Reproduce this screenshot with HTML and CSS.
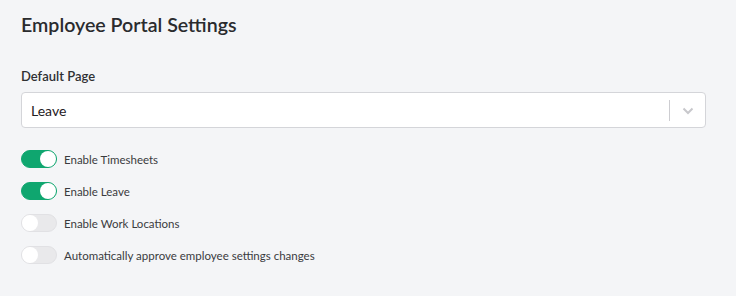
FILE: index.html
```html
<html>
    <head>
        <link rel="stylesheet" href="styles.css">
    </head>
    <body>
        <div class="panel">
            <h1 class="panelTitle">Employee Portal Settings</h1>
            <label class="fieldLabel">Default Page</label>
            <div class="selectBox">
                <span class="selectValue">Leave</span>
                <span class="selectDivider"></span>
                <span class="selectArrow">
                    <svg width="12" height="8" viewBox="0 0 12 8"><path d="M1.5 1.5 L6 6 L10.5 1.5" fill="none" stroke="#c8c8cc" stroke-width="2"/></svg>
                </span>
            </div>
            <div class="toggleList">
                <div class="toggleRow">
                    <span class="toggle on"><span class="knob"></span></span>
                    <span class="toggleText">Enable Timesheets</span>
                </div>
                <div class="toggleRow">
                    <span class="toggle on"><span class="knob"></span></span>
                    <span class="toggleText">Enable Leave</span>
                </div>
                <div class="toggleRow">
                    <span class="toggle"><span class="knob"></span></span>
                    <span class="toggleText">Enable Work Locations</span>
                </div>
                <div class="toggleRow">
                    <span class="toggle"><span class="knob"></span></span>
                    <span class="toggleText">Automatically approve employee settings changes</span>
                </div>
            </div>
        </div>
    </body>
</html>
```

FILE: styles.css
```css
/* page */
html{
    background-color: #f4f5f7;
}
body{
    margin: 0;
    font-family: Lato, "Open Sans", sans-serif;
    color: #2f3033;
}
.panel{
    padding: 12px 30px 0 21px;
}
.panelTitle{
    margin: 0;
    font-size: 19.6px;
    font-weight: 600;
    line-height: 26px;
    color: #2a2b2e;
}
.fieldLabel{
    display: block;
    margin-top: 30px;
    font-size: 13px;
    font-weight: 600;
    line-height: 16px;
}
/* select */
.selectBox{
    display: flex;
    align-items: center;
    margin-top: 8px;
    height: 34px;
    background: #ffffff;
    border: 1px solid #d4d5d9;
    border-radius: 4px;
}
.selectValue{
    flex: 1;
    padding-left: 9px;
    font-size: 14px;
    color: #1f2023;
}
.selectDivider{
    width: 1px;
    height: 21px;
    background: #cdcdd1;
}
.selectArrow{
    width: 35px;
    display: flex;
    justify-content: center;
    padding-top: 1px;
}
/* toggles */
.toggleList{
    margin-top: 22px;
    display: flex;
    flex-direction: column;
    gap: 14px;
}
.toggleRow{
    display: flex;
    align-items: center;
    height: 18px;
}
.toggle{
    box-sizing: border-box;
    width: 36px;
    height: 18px;
    border-radius: 9px;
    background: #e9e9eb;
    border: 1px solid #e1e1e4;
    position: relative;
    margin-right: 7px;
}
.toggle .knob{
    position: absolute;
    top: 0;
    left: 0;
    width: 16px;
    height: 16px;
    border-radius: 50%;
    background: #ffffff;
}
.toggle.on{
    background: #0fa66f;
    border-color: #0fa66f;
}
.toggle.on .knob{
    left: 18px;
}
.toggleText{
    font-size: 11.5px;
    color: #3a3b3e;
}
```
